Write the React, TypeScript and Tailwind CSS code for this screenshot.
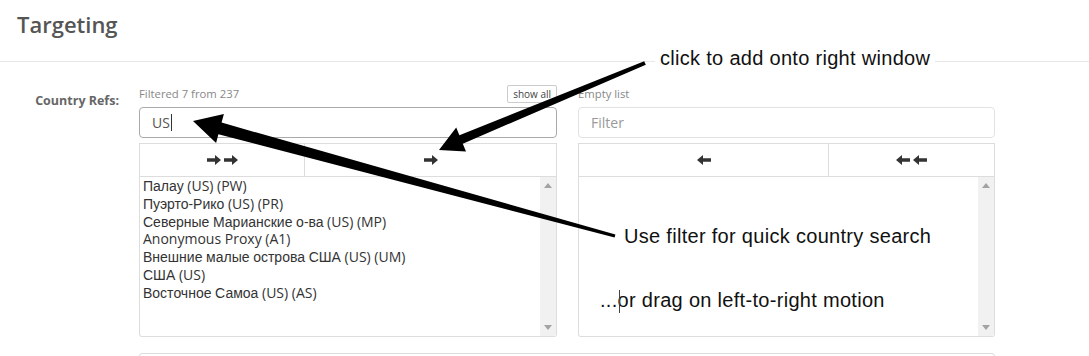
import React from "react";

const countries = [
  "Палау (US) (PW)",
  "Пуэрто-Рико (US) (PR)",
  "Северные Марианские о-ва (US) (MP)",
  "Anonymous Proxy (A1)",
  "Внешние малые острова США (US) (UM)",
  "США (US)",
  "Восточное Самоа (US) (AS)",
];

// cyrillic falls back to Arial in the original, latin stays Open Sans
function Mixed({ text }: { text: string }) {
  const parts = text.split(/([\u0400-\u04FF]+)/);
  return (
    <>
      {parts.map((p, i) =>
        i % 2 === 1 ? (
          <span key={i} className="font-['Liberation_Sans',Arial,sans-serif]">
            {p}
          </span>
        ) : (
          <span key={i}>{p}</span>
        )
      )}
    </>
  );
}

function Arrow({ left = false }: { left?: boolean }) {
  return (
    <svg width="14" height="10" viewBox="0 0 14 10" className={left ? "-scale-x-100" : ""}>
      <path d="M0 3.3 H8 V0 L14 5 L8 10 V6.7 H0 Z" fill="#333" />
    </svg>
  );
}

function Scrollbar() {
  return (
    <div className="flex w-[16px] flex-col items-center justify-between bg-[#f1f1f1] py-[6px]">
      <svg width="8" height="5" viewBox="0 0 8 5">
        <path d="M0 5 L4 0 L8 5 Z" fill="#a3a3a3" />
      </svg>
      <svg width="8" height="5" viewBox="0 0 8 5">
        <path d="M0 0 L8 0 L4 5 Z" fill="#a3a3a3" />
      </svg>
    </div>
  );
}

function ButtonRow({ side }: { side: "left" | "right" }) {
  if (side === "left") {
    return (
      <div className="mt-[5px] flex h-[34px]">
        <div className="flex w-[166px] items-center justify-center gap-[3px] border border-[#ddd]">
          <Arrow />
          <Arrow />
        </div>
        <div className="flex flex-1 items-center justify-center border-y border-r border-[#ddd]">
          <Arrow />
        </div>
      </div>
    );
  }
  return (
    <div className="mt-[5px] flex h-[34px]">
      <div className="flex flex-1 items-center justify-center border border-[#ddd]">
        <Arrow left />
      </div>
      <div className="flex w-[166px] items-center justify-center gap-[3px] border-y border-r border-[#ddd]">
        <Arrow left />
        <Arrow left />
      </div>
    </div>
  );
}

export default function App() {
  return (
    <div className="relative h-[356px] w-[1089px] overflow-hidden bg-white font-['Open_Sans',sans-serif]">
      <div className="h-[62px] border-b border-[#e8e8e8] px-[17px] pt-[8px]">
        <h1 className="text-[22px] font-semibold leading-[32px] text-[#555]">Targeting</h1>
      </div>

      <div className="flex pt-[23px]">
        <div className="w-[120px] pr-[1px] pt-[7px] text-right text-[12.5px] font-bold leading-[17px] text-[#666]">
          Country Refs:
        </div>

        <div className="ml-[19px] w-[856px]">
          <div className="flex gap-[21px]">
            {/* left list */}
            <div className="w-[418px]">
              <div className="flex h-[22px] items-start justify-between">
                <span className="pt-[1px] text-[11.3px] leading-[16px] text-[#888]">Filtered 7 from 237</span>
                <button className="h-[18px] rounded-[2px] border border-[#ccc] bg-white px-[5px] text-[10px] leading-[15px] text-[#444]">
                  show all
                </button>
              </div>
              <div className="flex h-[31px] items-center rounded-[4px] border border-[#aaa] px-[12px] text-[14px] text-[#555]">
                US
                <span className="ml-[1px] h-[17px] w-[1px] bg-[#333]" />
              </div>
              <ButtonRow side="left" />
              <div className="flex h-[160px] rounded-b-[3px] border border-t-0 border-[#ddd]">
                <div className="flex-1 pl-[3px] text-[14px] text-[#333]">
                  {countries.map((c) => (
                    <div key={c} className="h-[17.8px] whitespace-nowrap leading-[17.8px]">
                      <Mixed text={c} />
                    </div>
                  ))}
                </div>
                <Scrollbar />
              </div>
            </div>

            {/* right list */}
            <div className="w-[417px]">
              <div className="h-[22px] pt-[1px] text-[11.3px] leading-[16px] text-[#888]">Empty list</div>
              <div className="flex h-[31px] items-center rounded-[4px] border border-[#e2e2e2] px-[12px] text-[14px] text-[#999]">
                Filter
              </div>
              <ButtonRow side="right" />
              <div className="flex h-[160px] rounded-b-[3px] border border-t-0 border-[#ddd]">
                <div className="flex-1" />
                <Scrollbar />
              </div>
            </div>
          </div>

          <div className="mt-[16px] h-[20px] rounded-[3px] border border-[#ddd]" />
        </div>
      </div>

      {/* annotations drawn over the screenshot */}
      <svg className="pointer-events-none absolute inset-0" width="1089" height="356" viewBox="0 0 1089 356">
        <polygon
          points="439,150 456.2,127.5 459.4,135.3 644.2,61.2 645.8,64.8 462.8,143.7 466,151.5"
          fill="#000"
        />
        <polygon
          points="193,121 223.9,113.9 221.6,122.6 615.4,234.6 614.6,237.4 218.4,134.2 216.1,142.9"
          fill="#000"
        />
      </svg>
      <div className="absolute left-[655px] top-[46px] bg-white px-[5px] font-['Liberation_Sans',Arial,sans-serif] text-[20px] leading-[24px] tracking-[0.3px] text-[#111]">
        click to add onto right window
      </div>
      <div className="absolute left-[620px] top-[224px] bg-white px-[4px] font-['Liberation_Sans',Arial,sans-serif] text-[20px] leading-[24px] tracking-[0.3px] text-[#111]">
        Use filter for quick country search
      </div>
      <div className="absolute left-[600px] top-[288px] font-['Liberation_Sans',Arial,sans-serif] text-[20px] leading-[24px] tracking-[0.3px] text-[#111]">
        ...or drag on left-to-right motion
      </div>
      <div className="absolute left-[619px] top-[290px] h-[23px] w-[1px] bg-[#444]" />
    </div>
  );
}
